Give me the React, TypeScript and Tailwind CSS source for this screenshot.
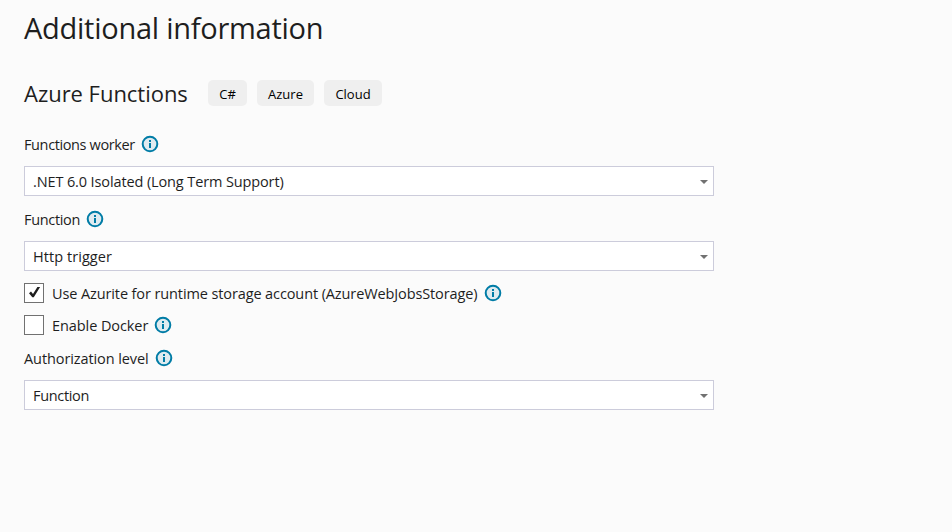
const selectText = "text-[14.5px] leading-[20px]";

function InfoIcon() {
  return (
    <svg className="size-[18px] shrink-0" viewBox="0 0 18 18">
      <circle cx="9" cy="9" r="7.3" fill="#dfebf0" stroke="#007ca6" strokeWidth="2" />
      <rect x="8" y="5" width="2" height="2" fill="#007ca6" />
      <rect x="8" y="8" width="2" height="5" fill="#007ca6" />
    </svg>
  );
}

function Label({ text, size }: { text: string; size: string }) {
  return (
    <div className="flex h-[18px] items-center">
      <span className={`relative top-px whitespace-nowrap ${selectText} ${size}`}>{text}</span>
      <InfoIcon />
    </div>
  );
}

function Select({ text, tracking }: { text: string; tracking: string }) {
  return (
    <div className="flex h-[30px] w-[690px] items-center justify-between border border-[#ccccdb] bg-white pr-[5px] pl-[8px]">
      <span className={`relative top-px ${selectText} ${tracking}`}>{text}</span>
      <svg className="mt-[2px] h-[4px] w-[8px]" viewBox="0 0 8 4">
        <path d="M0 0h8L4 4z" fill="#717171" />
      </svg>
    </div>
  );
}

function CheckRow({ checked, text, size }: { checked: boolean; text: string; size: string }) {
  return (
    <div className="flex h-[20px] items-center gap-[8px]">
      <span className="flex size-[20px] items-center justify-center border border-[#717171] bg-white">
        {checked && (
          <svg className="size-[18px]" viewBox="0 0 18 18">
            <path d="M4 9.2 6 7.5 8 9.9 12.4 3 15.1 3 8.8 13.3 7.3 13.3Z" fill="#1e1e1e" />
          </svg>
        )}
      </span>
      <Label text={text} size={size} />
    </div>
  );
}

export default function App() {
  return (
    <main className="h-[532px] w-[952px] bg-[#fbfbfb] pt-[8px] pl-[24px] font-['Open_Sans','Noto_Sans',sans-serif] text-[#1e1e1e]">
      <h1 className="text-[29px] leading-[40px] tracking-[-0.26px]">Additional information</h1>
      <div className="mt-[32px] flex h-[26px] items-center">
        <h2 className="w-[184px] text-[22px] leading-[26px] tracking-[-0.03px]">Azure Functions</h2>
        <div className="flex gap-[10px] text-[13px] leading-[26px] text-black">
          <span className="h-[26px] w-[39px] rounded-[5px] bg-[#efefef] pt-px text-center">C#</span>
          <span className="h-[26px] w-[57px] rounded-[5px] bg-[#efefef] pt-px text-center">Azure</span>
          <span className="h-[26px] w-[58px] rounded-[5px] bg-[#efefef] pt-px text-center">Cloud</span>
        </div>
      </div>
      <div className="mt-[29px]">
        <Label text="Functions worker" size="w-[117px] tracking-[-0.38px]" />
      </div>
      <div className="mt-[13px]">
        <Select text=".NET 6.0 Isolated (Long Term Support)" tracking="tracking-[-0.12px]" />
      </div>
      <div className="mt-[14px]">
        <Label text="Function" size="w-[62px] tracking-[-0.32px]" />
      </div>
      <div className="mt-[13px]">
        <Select text="Http trigger" tracking="tracking-[0.06px]" />
      </div>
      <div className="mt-[12px]">
        <CheckRow checked text="Use Azurite for runtime storage account (AzureWebJobsStorage)" size="w-[432px] tracking-[-0.11px]" />
      </div>
      <div className="mt-[12px]">
        <CheckRow checked={false} text="Enable Docker" size="w-[102px] tracking-[-0.08px]" />
      </div>
      <div className="mt-[14px]">
        <Label text="Authorization level" size="w-[131px] tracking-[-0.09px]" />
      </div>
      <div className="mt-[13px]">
        <Select text="Function" tracking="tracking-[-0.32px]" />
      </div>
    </main>
  );
}
